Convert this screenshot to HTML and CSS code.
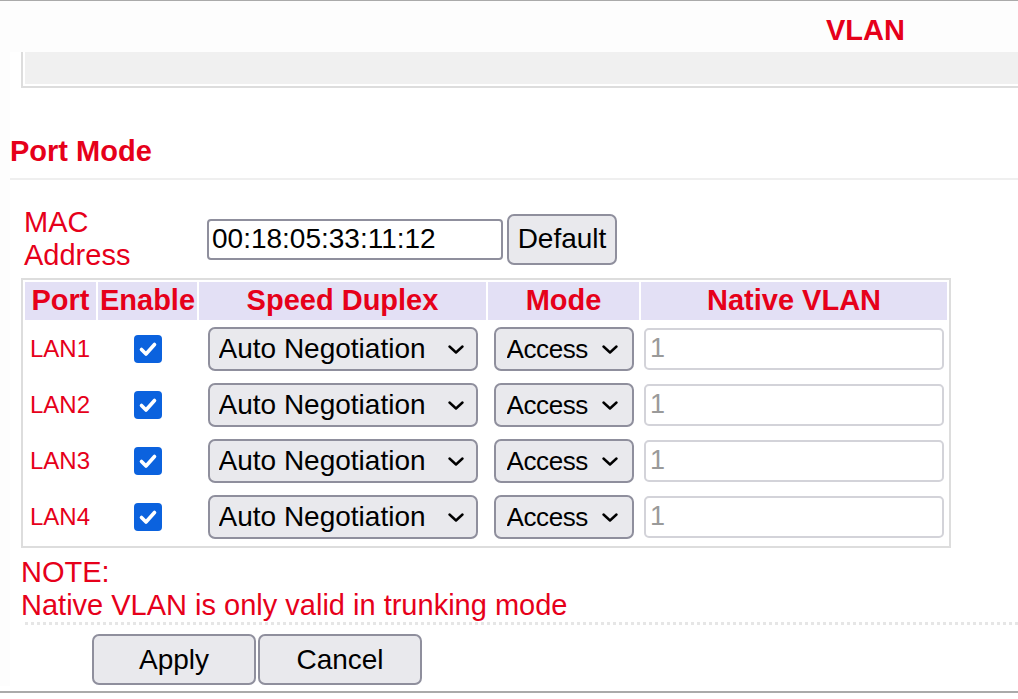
FILE: index.html
```html
<!DOCTYPE html>
<html lang="en">
<head>
<meta charset="utf-8">
<title>VLAN</title>
<link rel="stylesheet" href="styles.css">
</head>
<body>
<div class="page">
  <div class="topbar"><h1 class="title">VLAN</h1></div>
  <div class="content">
    <div class="tabbox"><div class="tabinner"></div></div>
    <h2 class="section">Port Mode</h2>
    <div class="macrow">
      <label class="maclabel" for="mac">MAC<br>Address</label>
      <input id="mac" class="mac" type="text" value="00:18:05:33:11:12">
      <button class="btn btn-default" type="button">Default</button>
    </div>
    <table class="ports">
      <colgroup>
        <col class="c-port"><col class="c-enable"><col class="c-speed"><col class="c-mode"><col class="c-native">
      </colgroup>
      <thead>
        <tr><th>Port</th><th>Enable</th><th>Speed Duplex</th><th>Mode</th><th>Native VLAN</th></tr>
      </thead>
      <tbody>
        <tr>
          <td class="port">LAN1</td>
          <td class="center"><span class="check"><svg viewBox="0 0 28 28" width="28" height="28"><polyline points="7.5,14.5 12,19 20.5,9.5" fill="none" stroke="#fff" stroke-width="3.6" stroke-linecap="round" stroke-linejoin="round"/></svg></span></td>
          <td class="center"><span class="sel sel-speed"><select><option>Auto Negotiation</option></select><svg class="chev" viewBox="0 0 16 9" width="16" height="9"><polyline points="1.5,1.5 8,7.5 14.5,1.5" fill="none" stroke="#000" stroke-width="2.4" stroke-linecap="round" stroke-linejoin="round"/></svg></span></td>
          <td class="center"><span class="sel sel-mode"><select><option>Access</option></select><svg class="chev" viewBox="0 0 16 9" width="16" height="9"><polyline points="1.5,1.5 8,7.5 14.5,1.5" fill="none" stroke="#000" stroke-width="2.4" stroke-linecap="round" stroke-linejoin="round"/></svg></span></td>
          <td class="center"><input class="native" type="text" value="1" disabled></td>
        </tr>
        <tr>
          <td class="port">LAN2</td>
          <td class="center"><span class="check"><svg viewBox="0 0 28 28" width="28" height="28"><polyline points="7.5,14.5 12,19 20.5,9.5" fill="none" stroke="#fff" stroke-width="3.6" stroke-linecap="round" stroke-linejoin="round"/></svg></span></td>
          <td class="center"><span class="sel sel-speed"><select><option>Auto Negotiation</option></select><svg class="chev" viewBox="0 0 16 9" width="16" height="9"><polyline points="1.5,1.5 8,7.5 14.5,1.5" fill="none" stroke="#000" stroke-width="2.4" stroke-linecap="round" stroke-linejoin="round"/></svg></span></td>
          <td class="center"><span class="sel sel-mode"><select><option>Access</option></select><svg class="chev" viewBox="0 0 16 9" width="16" height="9"><polyline points="1.5,1.5 8,7.5 14.5,1.5" fill="none" stroke="#000" stroke-width="2.4" stroke-linecap="round" stroke-linejoin="round"/></svg></span></td>
          <td class="center"><input class="native" type="text" value="1" disabled></td>
        </tr>
        <tr>
          <td class="port">LAN3</td>
          <td class="center"><span class="check"><svg viewBox="0 0 28 28" width="28" height="28"><polyline points="7.5,14.5 12,19 20.5,9.5" fill="none" stroke="#fff" stroke-width="3.6" stroke-linecap="round" stroke-linejoin="round"/></svg></span></td>
          <td class="center"><span class="sel sel-speed"><select><option>Auto Negotiation</option></select><svg class="chev" viewBox="0 0 16 9" width="16" height="9"><polyline points="1.5,1.5 8,7.5 14.5,1.5" fill="none" stroke="#000" stroke-width="2.4" stroke-linecap="round" stroke-linejoin="round"/></svg></span></td>
          <td class="center"><span class="sel sel-mode"><select><option>Access</option></select><svg class="chev" viewBox="0 0 16 9" width="16" height="9"><polyline points="1.5,1.5 8,7.5 14.5,1.5" fill="none" stroke="#000" stroke-width="2.4" stroke-linecap="round" stroke-linejoin="round"/></svg></span></td>
          <td class="center"><input class="native" type="text" value="1" disabled></td>
        </tr>
        <tr>
          <td class="port">LAN4</td>
          <td class="center"><span class="check"><svg viewBox="0 0 28 28" width="28" height="28"><polyline points="7.5,14.5 12,19 20.5,9.5" fill="none" stroke="#fff" stroke-width="3.6" stroke-linecap="round" stroke-linejoin="round"/></svg></span></td>
          <td class="center"><span class="sel sel-speed"><select><option>Auto Negotiation</option></select><svg class="chev" viewBox="0 0 16 9" width="16" height="9"><polyline points="1.5,1.5 8,7.5 14.5,1.5" fill="none" stroke="#000" stroke-width="2.4" stroke-linecap="round" stroke-linejoin="round"/></svg></span></td>
          <td class="center"><span class="sel sel-mode"><select><option>Access</option></select><svg class="chev" viewBox="0 0 16 9" width="16" height="9"><polyline points="1.5,1.5 8,7.5 14.5,1.5" fill="none" stroke="#000" stroke-width="2.4" stroke-linecap="round" stroke-linejoin="round"/></svg></span></td>
          <td class="center"><input class="native" type="text" value="1" disabled></td>
        </tr>
      </tbody>
    </table>
    <div class="note">NOTE:<br>Native VLAN is only valid in trunking mode</div>
    <div class="dots"></div>
    <div class="actions">
      <button class="btn btn-action" type="button">Apply</button><button class="btn btn-action" type="button">Cancel</button>
    </div>
  </div>
  <div class="footer"></div>
</div>
</body>
</html>
```

FILE: styles.css
```css
html, body {
  margin: 0;
  padding: 0;
  background: #fff;
}
body {
  font-family: "Liberation Sans", Arial, sans-serif;
  color: #e6001a;
}
.page {
  background: #fdfdfd;
}
.topbar {
  border-top: 1px solid #aaa;
  height: 52px;
  box-sizing: border-box;
  padding: 13px 0 0 826px;
  background: #fdfdfd;
}
.title {
  margin: 0;
  font-size: 29px;
  line-height: 32px;
  font-weight: bold;
  color: #e6001a;
}
.content {
  margin-left: 10px;
  background: #fff;
  padding-bottom: 1px;
}
.tabbox {
  margin-left: 11px;
  border-left: 2px solid #ddd;
  border-bottom: 2px solid #ddd;
  padding: 0 0 2px 2px;
}
.tabinner {
  height: 32px;
  background: #f0f0f0;
}
.section {
  margin: 47px 0 0 0;
  font-size: 29px;
  line-height: 33px;
  font-weight: bold;
  padding-bottom: 10px;
  border-bottom: 2px solid #efefef;
}
.macrow {
  display: flex;
  align-items: center;
  margin-top: 26px;
}
.maclabel {
  flex: none;
  width: 197px;
  box-sizing: border-box;
  padding-left: 14px;
  font-size: 29px;
  line-height: 33.3px;
}
.mac {
  flex: none;
  width: 296px;
  height: 41px;
  box-sizing: border-box;
  border: 2px solid #8f8f9d;
  border-radius: 4px;
  padding: 0 3px;
  font-family: "Liberation Sans", Arial, sans-serif;
  font-size: 28px;
  color: #000;
  background: #fff;
  margin: 0;
}
.btn {
  box-sizing: border-box;
  border: 2px solid #8f8f9d;
  border-radius: 7px;
  background: #e9e9ed;
  font-family: "Liberation Sans", Arial, sans-serif;
  font-size: 28px;
  color: #000;
  padding: 0;
  margin: 0;
}
.btn-default {
  flex: none;
  width: 110px;
  height: 51px;
  margin-left: 4px;
}
.ports {
  margin: 5px 0 0 11px;
  width: 930px;
  table-layout: fixed;
  border: 2px solid #ddd;
  border-collapse: separate;
  border-spacing: 2px;
}
.c-port { width: 71px; }
.c-enable { width: 99px; }
.c-speed { width: 287px; }
.c-mode { width: 151px; }
.c-native { width: 306px; }
.ports th {
  background: #e3e0f5;
  height: 38px;
  padding: 0;
  font-size: 29px;
  line-height: 33px;
  font-weight: bold;
  text-align: center;
  white-space: nowrap;
}
.ports td {
  height: 54px;
  padding: 0;
  vertical-align: middle;
}
.ports td.port {
  padding-left: 5px;
  font-size: 24px;
}
.ports td.center {
  text-align: center;
}
.check {
  display: inline-block;
  width: 28px;
  height: 28px;
  border-radius: 4px;
  background: #0b62de;
  vertical-align: middle;
}
.check svg {
  display: block;
}
.sel {
  position: relative;
  display: inline-block;
  vertical-align: middle;
}
.sel select {
  appearance: none;
  -webkit-appearance: none;
  display: block;
  height: 44px;
  box-sizing: border-box;
  border: 2px solid #8f8f9d;
  border-radius: 7px;
  background: #e9e9ed;
  font-family: "Liberation Sans", Arial, sans-serif;
  font-size: 28px;
  color: #000;
  padding: 0 0 0 9px;
  margin: 0;
}
.sel-speed select { width: 270px; }
.sel-mode select {
  width: 140px;
  font-size: 26px;
  letter-spacing: -0.4px;
  padding-left: 11px;
}
.chev {
  position: absolute;
  right: 14px;
  top: 18px;
  pointer-events: none;
}
.sel-mode .chev {
  right: 16px;
}
.native {
  width: 300px;
  height: 42px;
  box-sizing: border-box;
  border: 2px solid #d3d3d9;
  border-radius: 5px;
  background: #fff;
  padding: 0 4px;
  font-family: "Liberation Sans", Arial, sans-serif;
  font-size: 27px;
  color: #9a9a9a;
  vertical-align: middle;
  margin: 0;
}
.note {
  margin: 8px 0 0 11px;
  font-size: 29px;
  line-height: 33.3px;
}
.dots {
  margin: 0 0 0 15px;
  border-top: 3px dotted #e6e6e6;
}
.actions {
  display: flex;
  gap: 2px;
  margin-top: 9px;
  padding-left: 82px;
}
.btn-action {
  width: 164px;
  height: 51px;
}
.footer {
  height: 5px;
  background: #fff;
  border-bottom: 2px solid #aaa;
}
```
